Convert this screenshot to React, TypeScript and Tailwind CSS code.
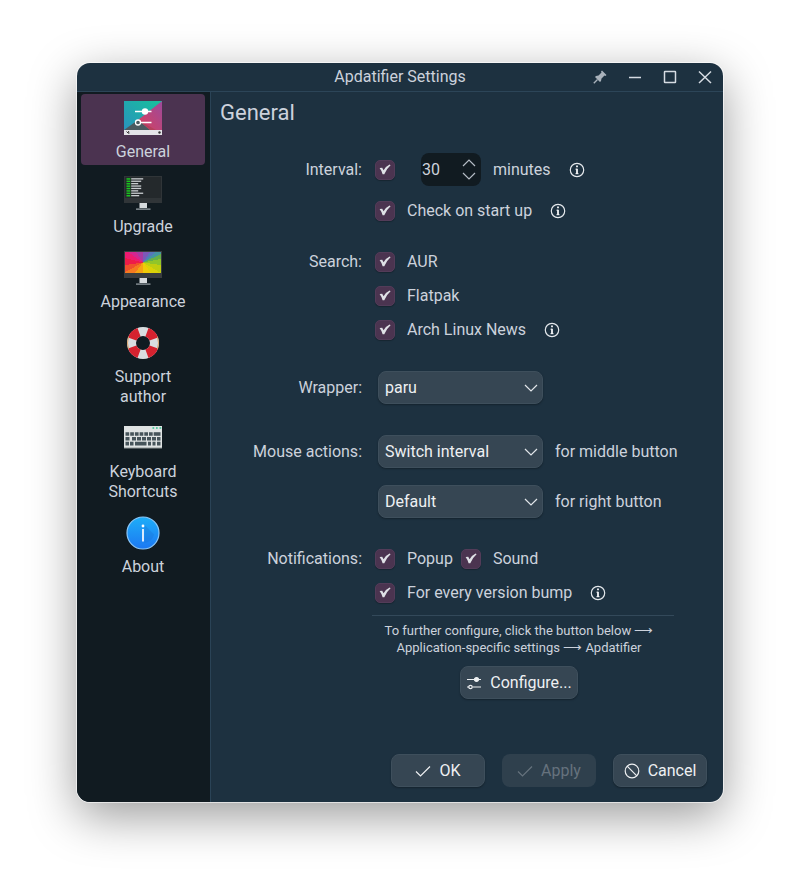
import { useState } from 'react';
import type { ReactNode } from 'react';

function GeneralIcon() {
  return (
    <svg width="38" height="34" viewBox="0 0 38 34" aria-hidden="true">
      <defs>
        <linearGradient id="gTeal" x1="0" y1="1" x2="1" y2="0">
          <stop offset="0" stopColor="#2b8fc0" />
          <stop offset="1" stopColor="#16c29b" />
        </linearGradient>
        <linearGradient id="gPink" x1="0" y1="1" x2="1" y2="0">
          <stop offset="0" stopColor="#d8405c" />
          <stop offset="1" stopColor="#9c4a9c" />
        </linearGradient>
      </defs>
      <rect width="38" height="34" fill="url(#gTeal)" />
      <path d="M38 0V29H26L14 19Z" fill="url(#gPink)" />
      <path d="M0 29L14 19L26 29Z" fill="#4b5a60" />
      <path d="M14 19L26 29H32Z" fill="#b5405c" />
      <rect y="29" width="38" height="5" fill="#e4e4e8" />
      <path d="M2.500 30.500l2 2M4.500 30l.5 2.500" stroke="#333" strokeWidth="1" />
      <circle cx="35.500" cy="31.500" r="1.200" fill="#333" />
      <path d="M11 10.500H27.500M14 21.500H27.500" stroke="#fff" strokeWidth="1.300" />
      <circle cx="21" cy="10.500" r="3.200" fill="#fff" />
      <circle cx="14" cy="21.500" r="2.500" fill="#4b5a60" stroke="#fff" strokeWidth="1.300" />
    </svg>
  );
}

function MonitorStand() {
  return (
    <>
      <path d="M15.500 27h7.500v5h-7.500z" fill="#d7dbde" />
      <path d="M12 32.500h14.500v1.200H12z" fill="#9aa3a8" />
    </>
  );
}

function UpgradeIcon() {
  const lines = [12, 10, 7, 10, 10, 7, 12, 8];
  return (
    <svg width="38" height="34" viewBox="0 0 38 34" aria-hidden="true">
      <rect width="38" height="27" fill="#303538" />
      <rect x="1" y="1" width="36" height="21" fill="#24292c" />
      {lines.map((w, i) => (
        <g key={i}>
          <rect x="2.500" y={2.2 + i * 2.4} width="3.800" height="1.500" fill="#19c41f" />
          <rect x="7.200" y={2.2 + i * 2.4} width={w} height="1.300" fill="#c9cdd0" />
        </g>
      ))}
      <MonitorStand />
    </svg>
  );
}

function AppearanceIcon() {
  return (
    <svg width="38" height="34" viewBox="0 0 38 34" aria-hidden="true">
      <rect width="38" height="27" fill="#393d40" />
      <g shapeRendering="crispEdges">
        <path d="M19 11.500L12 1H19Z" fill="#a93aa0" />
        <path d="M19 11.500L19 1H26Z" fill="#7c58b8" />
        <path d="M19 11.500L26 1H32Z" fill="#5578ba" />
        <path d="M19 11.500L32 1H37V3Z" fill="#4595a0" />
        <path d="M19 11.500L37 3V8Z" fill="#66b04a" />
        <path d="M19 11.500L37 8V14Z" fill="#91c52a" />
        <path d="M19 11.500L37 14V22Z" fill="#bfce10" />
        <path d="M19 11.500L37 22H27Z" fill="#dbd208" />
        <path d="M19 11.500L27 22H19Z" fill="#f0cb08" />
        <path d="M19 11.500L19 22H11Z" fill="#f5a314" />
        <path d="M19 11.500L11 22H1V21Z" fill="#f57a20" />
        <path d="M19 11.500L1 21V14Z" fill="#f0502c" />
        <path d="M19 11.500L1 14V7Z" fill="#ee1c48" />
        <path d="M19 11.500L1 7V1H4Z" fill="#ee1b70" />
        <path d="M19 11.500L4 1H12Z" fill="#d42690" />
      </g>
      <MonitorStand />
    </svg>
  );
}

function SupportIcon() {
  return (
    <svg width="34" height="34" viewBox="0 0 34 34" aria-hidden="true">
      <circle cx="17" cy="17" r="11.500" fill="none" stroke="#d9dde0" strokeWidth="9" />
      <circle
        cx="17"
        cy="17"
        r="11.500"
        fill="none"
        stroke="#d5222f"
        strokeWidth="9"
        pathLength="80"
        strokeDasharray="11 9"
        strokeDashoffset="-4.500"
      />
      <path d="M2.500 11Q.5 17 2.500 23M31.500 11Q33.500 17 31.500 23" stroke="#d9a46a" strokeWidth="1" fill="none" />
    </svg>
  );
}

function KeyboardIcon() {
  return (
    <svg width="38" height="23" viewBox="0 0 38 23" aria-hidden="true">
      <rect width="38" height="22" fill="#dfe3e3" />
      <rect y="21.500" width="38" height="1" fill="#8f9898" />
      <path d="M28.500 2h1.700M32 2h1.700M35.500 2h1.700" stroke="#2fc48d" strokeWidth="1.500" />
      <path d="M1.500 8H30" stroke="#46545a" strokeWidth="3.600" strokeDasharray="3.700 1" />
      <path d="M30 8H36.500" stroke="#46545a" strokeWidth="3.600" />
      <path d="M1.500 12.800h5M8 12.800h24" stroke="#46545a" strokeWidth="3.600" strokeDasharray="4 1" />
      <path d="M33 12.800h3.500" stroke="#46545a" strokeWidth="3.600" />
      <path d="M1.500 17.600h3.500M6 17.600h3.500M11 17.600h11.500M24 17.600h3M28.500 17.600h3M33 17.600h3.500" stroke="#46545a" strokeWidth="3.600" />
    </svg>
  );
}

function AboutIcon() {
  return (
    <svg width="34" height="34" viewBox="0 0 34 34" aria-hidden="true">
      <defs>
        <linearGradient id="gBlue" x1="0" y1="0" x2="0" y2="1">
          <stop offset="0" stopColor="#1eaef8" />
          <stop offset="1" stopColor="#1c78f2" />
        </linearGradient>
      </defs>
      <circle cx="17" cy="17" r="16" fill="url(#gBlue)" stroke="#8cc8fa" strokeWidth="1.200" />
      <path d="M18.500 9L28 18.500Q26 26 18.500 27Z" fill="#1866c8" opacity=".25" />
      <path d="M17 13V25.500" stroke="#dceafc" strokeWidth="2" />
      <circle cx="17" cy="10" r="1.400" fill="#fff" />
    </svg>
  );
}

const pages: { name: string; icon: ReactNode }[] = [
  { name: 'General', icon: <GeneralIcon /> },
  { name: 'Upgrade', icon: <UpgradeIcon /> },
  { name: 'Appearance', icon: <AppearanceIcon /> },
  { name: 'Support author', icon: <SupportIcon /> },
  { name: 'Keyboard Shortcuts', icon: <KeyboardIcon /> },
  { name: 'About', icon: <AboutIcon /> },
];

function CheckBox({ id, label, hideLabel }: { id: string; label: string; hideLabel?: boolean }) {
  return (
    <div className="flex items-center">
      <span className="relative flex h-5 w-5">
        <input
          id={id}
          type="checkbox"
          defaultChecked
          aria-label={hideLabel ? label : undefined}
          className="peer h-5 w-5 appearance-none rounded-[5px] border border-[#533c59] bg-[#4b3450] shadow-[0_1px_1px_rgba(0,0,0,0.25)]"
        />
        <svg
          viewBox="0 0 20 20"
          className="pointer-events-none absolute inset-0 hidden h-5 w-5 peer-checked:block"
          aria-hidden="true"
        >
          <path d="M4.600 8L7.200 7.800L8.600 10.200Q11 6.300 14.600 4.600L15.600 5.300Q11.500 8.800 9.300 14.200H7.600Q6.600 10.600 4.600 8Z" fill="#dfe1e6" />
        </svg>
      </span>
      {!hideLabel && (
        <label htmlFor={id} className="pl-3">
          {label}
        </label>
      )}
    </div>
  );
}

function Info({ about }: { about: string }) {
  return (
    <button type="button" aria-label={about} className="ml-[18px]">
      <svg width="16" height="16" viewBox="0 0 16 16" fill="none" aria-hidden="true">
        <circle cx="8" cy="8" r="6.700" stroke="#e4e8ec" strokeWidth="1.200" />
        <path d="M6.500 7.200H8M6.500 11.700h3" stroke="#f4f6f8" strokeWidth="1" />
        <path d="M8 3.500v1.800M8 6.800V12" stroke="#f4f6f8" strokeWidth="1.800" />
      </svg>
    </button>
  );
}

function Combo({ id, options, label }: { id: string; options: string[]; label: string }) {
  return (
    <div className="relative ml-[3px] flex w-[165px]">
      <select
        id={id}
        aria-label={label}
        className="h-[33px] w-full appearance-none rounded-lg border border-[#3e4f5c] bg-[#364653] pl-1.5 pr-8 text-[#eef0f2] shadow-[0_1px_2px_rgba(0,0,0,0.3)]"
      >
        {options.map((o) => (
          <option key={o}>{o}</option>
        ))}
      </select>
      <svg
        width="14"
        height="8"
        viewBox="0 0 14 8"
        className="pointer-events-none absolute right-[5px] top-[13px]"
        aria-hidden="true"
      >
        <path d="M1 1L7 7L13 1" fill="none" stroke="#e2e6ea" strokeWidth="1.200" />
      </svg>
    </div>
  );
}

function Row({ title, tall, children }: { title?: string; tall?: boolean; children: ReactNode }) {
  return (
    <div className={`grid grid-cols-[151px_1fr] items-center gap-x-[13px] ${tall ? 'h-[33px]' : 'h-5'}`}>
      <span className="text-right">{title}</span>
      <div className="flex items-center">{children}</div>
    </div>
  );
}

const actionButton =
  'flex h-[33px] items-center justify-center gap-2 rounded-lg border border-[#3e4f5c] bg-[#364653] text-[#eef0f2] shadow-[0_1px_2px_rgba(0,0,0,0.3)]';

function Tick() {
  return (
    <svg width="16" height="16" viewBox="0 0 16 16" fill="none" stroke="currentColor" strokeWidth="1.200" aria-hidden="true">
      <path d="M1 8.500L5.500 13L15 3.500" />
    </svg>
  );
}

export default function App() {
  const [page, setPage] = useState('General');
  const [minutes, setMinutes] = useState(30);

  return (
    <div className="flex min-h-screen bg-white px-[77px] pt-[63px] pb-[91px] font-['Roboto','Noto_Sans',sans-serif] text-[16px] leading-5 text-[#ccd2dc]">
      <div className="flex flex-1 flex-col overflow-hidden rounded-[13px] bg-[#1d3140] shadow-[0_0_0_1px_rgba(255,255,255,0.6),0_14px_48px_rgba(0,0,0,0.4)]">
        <header className="grid h-[29px] grid-cols-[1fr_auto_1fr] items-center border-b border-[#2c4558]">
          <h1 className="col-start-2">Apdatifier Settings</h1>
          <div className="flex items-center justify-end gap-[21px] pr-[11px]">
            <button type="button" aria-label="Keep above">
              <svg width="14" height="14" viewBox="0 0 14 14" aria-hidden="true">
                <path d="M9 0.500L13.500 5L12.500 6L11.500 5.500L8.500 8.500L8 11L7 12L2 7L3 6L5.500 5.500L8.500 2.500L8 1.500Z" fill="#a9b2bb" />
                <path d="M4.500 9.500L0.800 13.200" stroke="#a9b2bb" strokeWidth="1.300" />
              </svg>
            </button>
            <button type="button" aria-label="Minimize">
              <svg width="14" height="14" viewBox="0 0 14 14" aria-hidden="true">
                <path d="M1 7.500H13" stroke="#d5dbe2" strokeWidth="1.500" />
              </svg>
            </button>
            <button type="button" aria-label="Maximize">
              <svg width="14" height="14" viewBox="0 0 14 14" fill="none" aria-hidden="true">
                <rect x="1.500" y="1.500" width="11" height="11" rx="0.500" stroke="#d5dbe2" strokeWidth="1.500" />
              </svg>
            </button>
            <button type="button" aria-label="Close">
              <svg width="14" height="14" viewBox="0 0 14 14" aria-hidden="true">
                <path d="M1 1.500L13 13M13 1.500L1 13" stroke="#d5dbe2" strokeWidth="1.500" />
              </svg>
            </button>
          </div>
        </header>

        <div className="flex flex-1">
          <nav className="flex w-[134px] shrink-0 flex-col gap-1 border-r border-[#2a4356] bg-[#111b21] pt-0.5 pr-[5px] pl-1">
            {pages.map((p) => (
              <button
                key={p.name}
                type="button"
                aria-current={page === p.name ? 'page' : undefined}
                onClick={() => setPage(p.name)}
                className={`flex flex-col items-center rounded-[4px] px-5 pt-1 pb-[3px] ${
                  page === p.name ? 'bg-[#4b3350]' : ''
                }`}
              >
                <span className="mb-[5px] flex h-[39px] items-center justify-center">{p.icon}</span>
                <span>{p.name}</span>
              </button>
            ))}
          </nav>

          <main className="flex flex-1 flex-col pt-[7px]">
            <h2 className="pl-[9px] text-[22px] leading-7">General</h2>

            <form className="flex flex-1 flex-col" onSubmit={(e) => e.preventDefault()}>
              <div className="mt-[26px] flex flex-col gap-[31px]">
                <div className="flex flex-col gap-[15px]">
                  <Row title="Interval:" tall>
                    <CheckBox id="interval" label="Interval" hideLabel />
                    <div className="ml-[26px] flex h-[33px] w-[60px] items-center rounded-lg bg-[#111b21]">
                      <input
                        id="minutes"
                        value={minutes}
                        onChange={(e) => setMinutes(Number(e.target.value) || 0)}
                        className="w-[41px] bg-transparent pl-px outline-none"
                      />
                      <span className="flex flex-col gap-[5px]">
                        <button type="button" aria-label="Increase" className="flex" onClick={() => setMinutes(minutes + 1)}>
                          <svg width="14" height="8" viewBox="0 0 14 8" aria-hidden="true">
                            <path d="M1 7L7 1L13 7" fill="none" stroke="#b4bbc4" strokeWidth="1.200" />
                          </svg>
                        </button>
                        <button type="button" aria-label="Decrease" className="flex" onClick={() => setMinutes(minutes - 1)}>
                          <svg width="14" height="8" viewBox="0 0 14 8" aria-hidden="true">
                            <path d="M1 1L7 7L13 1" fill="none" stroke="#b4bbc4" strokeWidth="1.200" />
                          </svg>
                        </button>
                      </span>
                    </div>
                    <label htmlFor="minutes" className="pl-3">
                      minutes
                    </label>
                    <Info about="About the interval" />
                  </Row>
                  <Row>
                    <CheckBox id="startup" label="Check on start up" />
                    <Info about="About checking on start up" />
                  </Row>
                </div>

                <div className="flex flex-col gap-3.5">
                  <Row title="Search:">
                    <CheckBox id="aur" label="AUR" />
                  </Row>
                  <Row>
                    <CheckBox id="flatpak" label="Flatpak" />
                  </Row>
                  <Row>
                    <CheckBox id="news" label="Arch Linux News" />
                    <Info about="About news" />
                  </Row>
                </div>

                <Row title="Wrapper:" tall>
                  <Combo id="wrapper" label="Wrapper" options={['paru', 'yay']} />
                </Row>

                <div className="flex flex-col gap-[17px]">
                  <Row title="Mouse actions:" tall>
                    <Combo id="middle" label="Middle button" options={['Switch interval', 'Default']} />
                    <label htmlFor="middle" className="pl-3">
                      for middle button
                    </label>
                  </Row>
                  <Row tall>
                    <Combo id="right" label="Right button" options={['Default', 'Switch interval']} />
                    <label htmlFor="right" className="pl-3">
                      for right button
                    </label>
                  </Row>
                </div>

                <div className="flex flex-col gap-3.5">
                  <Row title="Notifications:">
                    <CheckBox id="popup" label="Popup" />
                    <div className="pl-2">
                      <CheckBox id="sound" label="Sound" />
                    </div>
                  </Row>
                  <Row>
                    <CheckBox id="bump" label="For every version bump" />
                    <Info about="About version bumps" />
                  </Row>
                </div>
              </div>

              <div className="mt-3 ml-[161px] w-[302px] border-t border-[#33495a] pt-1.5 pr-2">
                <p className="text-center text-[13px] leading-[17px]">
                  To further configure, click the button below ⟶
                  <br />
                  Application-specific settings ⟶ Apdatifier
                </p>
                <button type="button" className={`${actionButton} mx-auto mt-2.5 w-[118px]`}>
                  <svg width="16" height="14" viewBox="0 0 16 14" fill="none" stroke="currentColor" strokeWidth="1.200" aria-hidden="true">
                    <path d="M1 3.500H15M1 11H3M6.500 11H15" />
                    <circle cx="10.500" cy="3.500" r="2" fill="currentColor" />
                    <circle cx="4.500" cy="11" r="1.700" />
                  </svg>
                  Configure...
                </button>
              </div>

              <div className="mt-auto flex justify-end gap-[17px] pr-4 pb-[15px]">
                <button type="submit" className={`${actionButton} w-[94px]`}>
                  <Tick />
                  OK
                </button>
                <button
                  type="button"
                  disabled
                  className="flex h-[33px] w-[94px] items-center justify-center gap-2 rounded-lg bg-[#2f404d] text-[#66727d]"
                >
                  <Tick />
                  Apply
                </button>
                <button type="button" className={`${actionButton} w-[94px]`}>
                  <svg width="16" height="16" viewBox="0 0 16 16" fill="none" stroke="currentColor" strokeWidth="1.200" aria-hidden="true">
                    <circle cx="8" cy="8" r="6.800" />
                    <path d="M3.200 3.200L12.800 12.800" />
                  </svg>
                  Cancel
                </button>
              </div>
            </form>
          </main>
        </div>
      </div>
    </div>
  );
}
